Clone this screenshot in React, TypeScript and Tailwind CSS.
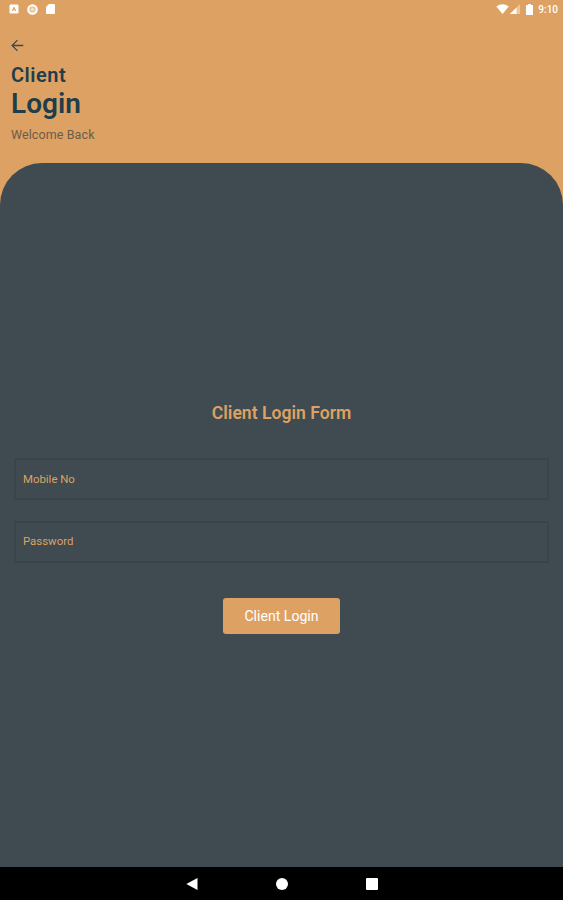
const StatusBar = () => {
  return (
    <div className="flex h-[18px] items-center justify-between pl-[9px] pr-[5px] text-white">
      <div className="flex items-center gap-[8px]">
        <svg className="h-[10px] w-[10px]" viewBox="0 0 10 10" fill="none">
          <rect x="0.5" y="0.5" width="9" height="9" rx="1.3" fill="white" />
          <path d="M3.4 7 5 3.2 6.6 7M3.9 5.8h2.2" stroke="#dda263" strokeWidth="1" />
        </svg>
        <svg className="h-[11px] w-[11px]" viewBox="0 0 11 11" fill="none">
          <circle cx="5.5" cy="5.5" r="4.3" fill="#edc79c" stroke="white" strokeWidth="2" />
          <circle cx="5.5" cy="5.5" r="1.3" fill="#fbe9d5" />
        </svg>
        <svg className="h-[10px] w-[9px]" viewBox="0 0 9 10">
          <path d="M3 0h5q1 0 1 1v8q0 1-1 1H1q-1 0-1-1V3z" fill="white" />
        </svg>
      </div>
      <div className="flex items-center">
        <svg className="h-[10px] w-[13px]" viewBox="0 0 13 10">
          <path d="M0.3 2.5Q6.5-2 12.7 2.5L6.5 10z" fill="white" />
        </svg>
        <svg className="ml-[1px] h-[10px] w-[10px]" viewBox="0 0 10 10">
          <path d="M0 10 10 0v10z" fill="white" fillOpacity="0.4" />
          <path d="M0 10 6.5 3.5V10z" fill="white" />
        </svg>
        <svg className="ml-[6px] h-[11px] w-[7px]" viewBox="0 0 7 11">
          <path d="M2 0h3v1h2v10H0V1h2z" fill="white" />
        </svg>
        <span className="ml-[5px] pt-px text-[10px] leading-none font-medium">9:10</span>
      </div>
    </div>
  );
};

const App = () => {
  return (
    <div className="flex h-screen w-full flex-col bg-[#dda263] font-['Roboto',sans-serif]">
      {/* Header */}
      <header className="h-[163px] shrink-0 text-[#1f3d4b]">
        <StatusBar />
        <div className="pl-[11px]">
          <button className="mt-[21px] block" aria-label="Back">
            <svg className="h-[13px] w-[13px]" viewBox="0 0 13 13" fill="none">
              <path d="M12.3 6.5H1.3M6.5 1.1 1.1 6.5l5.4 5.4" stroke="#3d4a4f" strokeWidth="1.3" />
            </svg>
          </button>
          <h2 className="mt-[11px] text-[20px] leading-6 font-semibold tracking-[0.5px]">Client</h2>
          <h1 className="mt-px text-[28px] leading-8 font-semibold">Login</h1>
          <p className="mt-[7px] text-[12.5px] leading-4 tracking-[0.1px] text-[#6c5b4b]">Welcome Back</p>
        </div>
      </header>

      {/* Login form */}
      <main className="flex flex-1 flex-col items-center rounded-t-[42px] bg-[#3f4a51] px-[14px] pt-[238px]">
        <h3 className="text-[17.6px] leading-6 font-semibold text-[#dda263]">Client Login Form</h3>
        <input
          className="mt-[33px] h-[42px] w-full border-2 border-[#39444b] px-[7px] text-[11.4px] text-[#dda263] placeholder:text-[#dda263] placeholder:opacity-100"
          type="tel"
          placeholder="Mobile No"
        />
        <input
          className="mt-[21px] h-[42px] w-full border-2 border-[#39444b] px-[7px] pb-[2px] text-[11.4px] text-[#dda263] placeholder:text-[#dda263] placeholder:opacity-100"
          type="password"
          placeholder="Password"
        />
        <button className="mt-[35px] h-[36px] w-[117px] rounded-[3px] bg-[#dda263] pt-px text-[14.1px] text-white">
          Client Login
        </button>
      </main>

      {/* Android navigation bar */}
      <nav className="flex h-[33px] shrink-0 items-center justify-center gap-[78px] bg-black">
        <svg className="h-3 w-3" viewBox="0 0 12 12" fill="white">
          <path d="M11.5 0v12L0.3 6z" />
        </svg>
        <svg className="h-3 w-3" viewBox="0 0 12 12" fill="white">
          <circle cx="6" cy="6" r="6" />
        </svg>
        <svg className="h-3 w-3" viewBox="0 0 12 12" fill="white">
          <rect width="12" height="12" rx="1" />
        </svg>
      </nav>
    </div>
  );
};

export default App;
